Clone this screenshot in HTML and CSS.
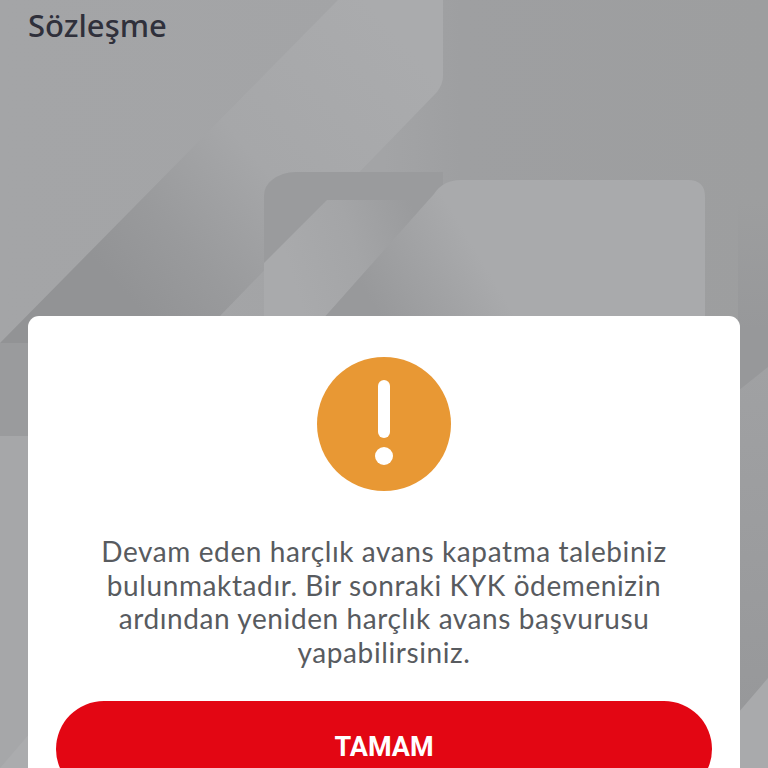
FILE: index.html
```html
<!DOCTYPE html>
<html lang="tr">
<head>
<meta charset="utf-8">
<title>Sözleşme</title>
<link rel="stylesheet" href="styles.css">
</head>
<body>
<svg class="backdrop" width="768" height="768" viewBox="0 0 768 768" aria-hidden="true">
  <defs>
    <linearGradient id="bgBase" x1="0" y1="0" x2="1" y2="0">
      <stop offset="0" stop-color="#a4a5a7"/>
      <stop offset="0.5" stop-color="#a3a4a6"/>
      <stop offset="0.6" stop-color="#9e9fa1"/>
      <stop offset="1" stop-color="#9d9e9f"/>
    </linearGradient>
    <linearGradient id="band" gradientUnits="userSpaceOnUse" x1="420" y1="60" x2="140" y2="310">
      <stop offset="0" stop-color="#aaabad"/>
      <stop offset="0.5" stop-color="#a6a7a9"/>
      <stop offset="0.8" stop-color="#999a9c"/>
      <stop offset="1" stop-color="#929395"/>
    </linearGradient>
    <linearGradient id="lightA" gradientUnits="userSpaceOnUse" x1="290" y1="270" x2="420" y2="230">
      <stop offset="0" stop-color="#a9aaac"/>
      <stop offset="0.5" stop-color="#a4a5a7"/>
      <stop offset="1" stop-color="#9a9b9d"/>
    </linearGradient>
    <linearGradient id="sq2" gradientUnits="userSpaceOnUse" x1="370" y1="300" x2="470" y2="240">
      <stop offset="0" stop-color="#98999b"/>
      <stop offset="0.6" stop-color="#a2a3a5"/>
      <stop offset="1" stop-color="#a9aaac"/>
    </linearGradient>
    <linearGradient id="rightStrip" x1="0" y1="0" x2="0" y2="1">
      <stop offset="0" stop-color="#a0a1a3"/>
      <stop offset="1" stop-color="#97989a"/>
    </linearGradient>
    <linearGradient id="rightDark" gradientUnits="userSpaceOnUse" x1="0" y1="200" x2="0" y2="330">
      <stop offset="0" stop-color="#9d9e9f"/>
      <stop offset="1" stop-color="#97989a"/>
    </linearGradient>
  </defs>
  <rect width="768" height="768" fill="url(#bgBase)"/>
  <path d="M338 0H443V76Q443 84 437 92L220 316V343H0Z" fill="url(#band)"/>
  <path d="M264 196Q264 186 272 180Q282 172 296 172H443V320H264Z" fill="#9a9b9d"/>
  <path d="M264 263L327 200H443V263H377L327 320H264Z" fill="url(#lightA)"/>
  <path d="M461 180H688Q705 180 705 197V320H322L434 194Q443 180 461 180Z" fill="url(#sq2)"/>
  <path d="M0 343H30V436H0Z" fill="#9a9b9d"/>
  <path d="M0 436H30V768H0Z" fill="#a6a7a9"/>
  <path d="M0 768L30 733V768Z" fill="#abacae"/>
  <path d="M738 200H768V768H738Z" fill="url(#rightDark)"/>
  <path d="M738 391L768 367V678L738 711Z" fill="url(#rightStrip)"/>
  <path d="M738 713L768 678V768H738Z" fill="#a9aaac"/>
</svg>
<main class="page">
  <h1 class="title">Sözleşme</h1>
  <section class="card">
    <div class="alert-icon" aria-hidden="true">
      <span class="alert-bar"></span>
      <span class="alert-dot"></span>
    </div>
    <p class="message">Devam eden harçlık avans kapatma talebiniz bulunmaktadır. Bir sonraki KYK ödemenizin ardından yeniden harçlık avans başvurusu yapabilirsiniz.</p>
    <button class="primary" type="button">TAMAM</button>
  </section>
</main>
</body>
</html>
```
FILE: styles.css
```css
html, body {
  margin: 0;
  height: 100%;
  overflow: hidden;
  background: #a0a1a3;
}
.backdrop {
  position: absolute;
  top: 0;
  left: 0;
}
.page {
  position: relative;
  display: flex;
  flex-direction: column;
  height: 768px;
  padding: 7px 28px 0;
  box-sizing: border-box;
  overflow: hidden;
}
.title {
  flex: none;
  margin: 0;
  height: 309px;
  font-family: "Noto Sans", sans-serif;
  font-size: 31px;
  line-height: 36px;
  font-weight: 500;
  color: #2f303b;
}
.card {
  display: flex;
  flex-direction: column;
  align-items: center;
  flex: none;
  height: 500px;
  background: #fff;
  border-radius: 11px 11px 0 0;
  padding: 41px 28px 0;
}
.alert-icon {
  display: flex;
  flex-direction: column;
  align-items: center;
  flex: none;
  width: 134px;
  height: 134px;
  border-radius: 50%;
  background: #e89834;
  padding-top: 23px;
  box-sizing: border-box;
}
.alert-bar {
  width: 12px;
  height: 58px;
  border-radius: 6px;
  background: #fff;
}
.alert-dot {
  width: 18px;
  height: 18px;
  margin-top: 9px;
  border-radius: 50%;
  background: #fff;
}
.message {
  flex: none;
  margin: 44px 0 1px;
  max-width: 600px;
  font-family: Lato, sans-serif;
  font-size: 28px;
  line-height: 33.5px;
  letter-spacing: 0.6px;
  font-weight: 400;
  text-align: center;
  color: #585b5f;
}
.primary {
  flex: none;
  width: 656px;
  height: 96px;
  margin-top: 31px;
  border: 0;
  border-radius: 48px;
  padding: 0 0 5px;
  background: #e30613;
  color: #fff;
  font-family: Roboto, sans-serif;
  font-size: 27px;
  font-weight: 700;
}
```
